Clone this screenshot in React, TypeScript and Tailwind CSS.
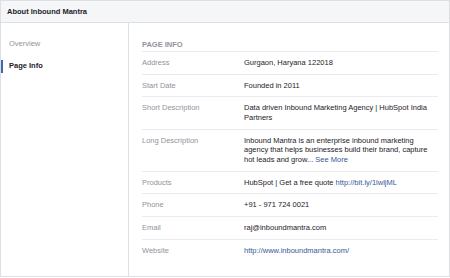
const rows: { label: string; value: React.ReactNode }[] = [
  { label: "Address", value: "Gurgaon, Haryana 122018" },
  { label: "Start Date", value: "Founded in 2011" },
  {
    label: "Short Description",
    value: "Data driven Inbound Marketing Agency | HubSpot India Partners",
  },
  {
    label: "Long Description",
    value: (
      <>
        Inbound Mantra is an enterprise inbound marketing
        <br />
        agency that helps businesses build their brand, capture
        <br />
        hot leads and grow...{" "}
        <a className="text-[#365899]">See More</a>
      </>
    ),
  },
  {
    label: "Products",
    value: (
      <>
        HubSpot | Get a free quote{" "}
        <a className="text-[#365899]">http://bit.ly/1lwljML</a>
      </>
    ),
  },
  { label: "Phone", value: "+91 - 971 724 0021" },
  { label: "Email", value: "raj@inboundmantra.com" },
  {
    label: "Website",
    value: <a className="text-[#365899]">http://www.inboundmantra.com/</a>,
  },
];

const App = () => {
  return (
    <div className="w-[450px] h-[278px] bg-white font-['Liberation_Sans',Arial,sans-serif] text-[7.5px] text-[#1d2129]">
      <div className="w-[450px] h-[277px] border border-[#dddfe2] flex flex-col">
        <div className="h-[22px] shrink-0 bg-[#f5f6f7] border-b border-[#dddfe2] pl-[6px] flex items-center font-bold">
          About Inbound Mantra
        </div>
        <div className="flex flex-1">
          <div className="w-[128px] shrink-0 border-r border-[#dddfe2] pt-[10px]">
            <div className="h-[22px] flex items-center pl-[8px] text-[#90949c]">
              Overview
            </div>
            <div className="h-[22px] flex items-center">
              <span className="w-[2px] h-[13px] bg-[#4267b2]" />
              <span className="ml-[6px] font-bold">Page Info</span>
            </div>
          </div>
          <div className="flex-1 pl-[13px] pr-[11px] pt-[17px]">
            <div className="leading-[10px] pb-[1px] border-b border-[#e9ebee] font-bold text-[#90949c]">
              PAGE INFO
            </div>
            {rows.map((r, i) => (
              <div
                key={r.label}
                className={
                  "flex py-[6px] leading-[9.65px] " +
                  (i < rows.length - 1 ? "border-b border-[#e9ebee]" : "")
                }
              >
                <div className="w-[102px] shrink-0 text-[#90949c]">{r.label}</div>
                <div className="flex-1">{r.value}</div>
              </div>
            ))}
          </div>
        </div>
      </div>
    </div>
  );
};

export default App;
